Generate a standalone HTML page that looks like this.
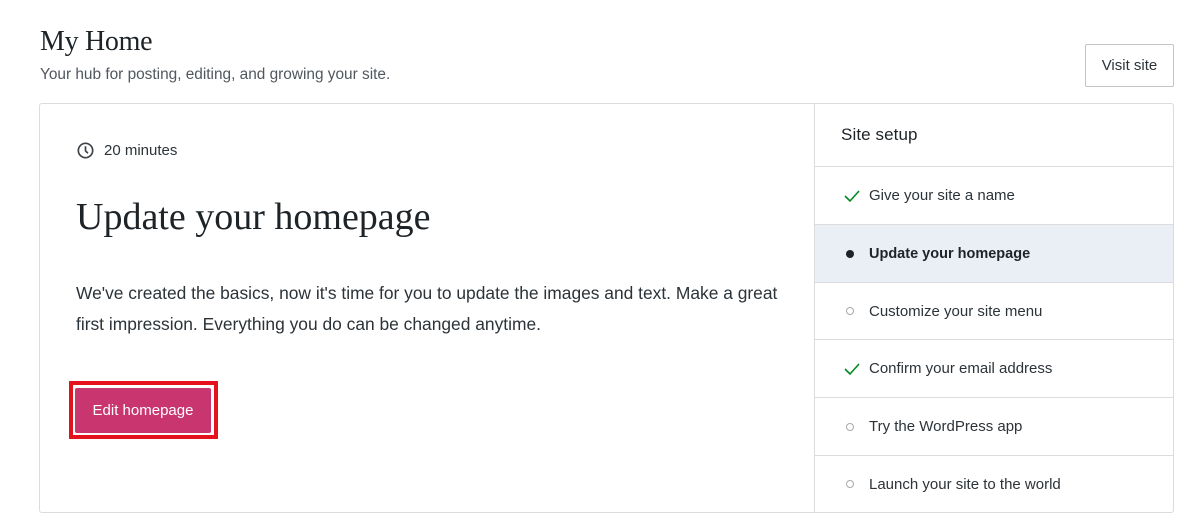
<!DOCTYPE html>
<html><head><style>
*{box-sizing:border-box;margin:0;padding:0}
body{width:1200px;height:524px;background:#fff;font-family:"Liberation Sans",sans-serif;color:#1e1e1e;position:relative;overflow:hidden}
.abs{position:absolute}
h1{position:absolute;left:40px;top:26px;font-family:"Liberation Serif",serif;font-weight:400;font-size:28px;color:#1d2327;letter-spacing:-0.3px}
.sub{left:40px;top:66px;font-size:15.4px;color:#50575e}
.visit{left:1085px;top:44px;width:89px;height:43px;border:1px solid #c3c4c7;border-radius:2px;font-size:15px;color:#2c3338;display:flex;align-items:center;justify-content:center}
.card{left:39px;top:103px;width:1135px;height:410px;border:1px solid #dcdcde;border-radius:3px}
.side{left:814px;top:103px;width:360px;height:410px;border-left:1px solid #dcdcde}
.row{position:absolute;left:815px;width:358px;border-top:1px solid #dcdcde;font-size:15px;color:#2c3338;display:flex;align-items:center;padding-left:54px}
.ic{position:absolute;left:28px}
</style></head><body>
<h1>My Home</h1>
<div class="abs sub">Your hub for posting, editing, and growing your site.</div>
<div class="abs visit">Visit site</div>
<div class="abs card"></div>
<div class="abs side"></div>
<svg class="abs" style="left:76px;top:141px" width="19" height="19" viewBox="0 0 18 18"><circle cx="9" cy="9" r="6.8" fill="none" stroke="#3c434a" stroke-width="1.6"/><path d="M9 5v4.3l2.3 2.3" fill="none" stroke="#3c434a" stroke-width="1.6"/></svg>
<div class="abs" style="left:104px;top:142px;font-size:15px;color:#2c3338">20 minutes</div>
<div class="abs" style="left:76px;top:195px;font-family:'Liberation Serif',serif;font-size:38px;color:#1d2327">Update your homepage</div>
<div class="abs" style="left:76px;top:278px;width:712px;font-size:17.4px;line-height:31px;color:#2c3338">We've created the basics, now it's time for you to update the images and text. Make a great first impression. Everything you do can be changed anytime.</div>
<div class="abs" style="left:69px;top:381px;width:149px;height:58px;border:4px solid #e3121c"></div>
<div class="abs" style="left:75px;top:388px;width:136px;height:45px;background:#c9356e;border-radius:2px;color:#fff;font-size:15px;display:flex;align-items:center;justify-content:center">Edit homepage</div>
<div class="abs" style="left:841px;top:125px;font-size:17px;font-weight:400;color:#1d2327;letter-spacing:0.1px">Site setup</div>
<div class="row" style="top:166px;height:58px"><svg class="ic" width="18" height="14" viewBox="0 0 18 14"><path d="M2 7l5 5L16 2" fill="none" stroke="#008a20" stroke-width="1.6"/></svg>Give your site a name</div>
<div class="row" style="top:224px;height:58px;background:#e9eff5;font-weight:bold;font-size:14.5px;color:#1d2327"><span class="ic" style="left:31px;width:8px;height:8px;border-radius:50%;background:#1d2327"></span>Update your homepage</div>
<div class="row" style="top:282px;height:57px"><span class="ic" style="left:31px;width:8px;height:8px;border-radius:50%;border:1px solid #a7aaad"></span>Customize your site menu</div>
<div class="row" style="top:339px;height:58px"><svg class="ic" width="18" height="14" viewBox="0 0 18 14"><path d="M2 7l5 5L16 2" fill="none" stroke="#008a20" stroke-width="1.6"/></svg>Confirm your email address</div>
<div class="row" style="top:397px;height:58px"><span class="ic" style="left:31px;width:8px;height:8px;border-radius:50%;border:1px solid #a7aaad"></span>Try the WordPress app</div>
<div class="row" style="top:455px;height:57px"><span class="ic" style="left:31px;width:8px;height:8px;border-radius:50%;border:1px solid #a7aaad"></span>Launch your site to the world</div>
</body></html>
